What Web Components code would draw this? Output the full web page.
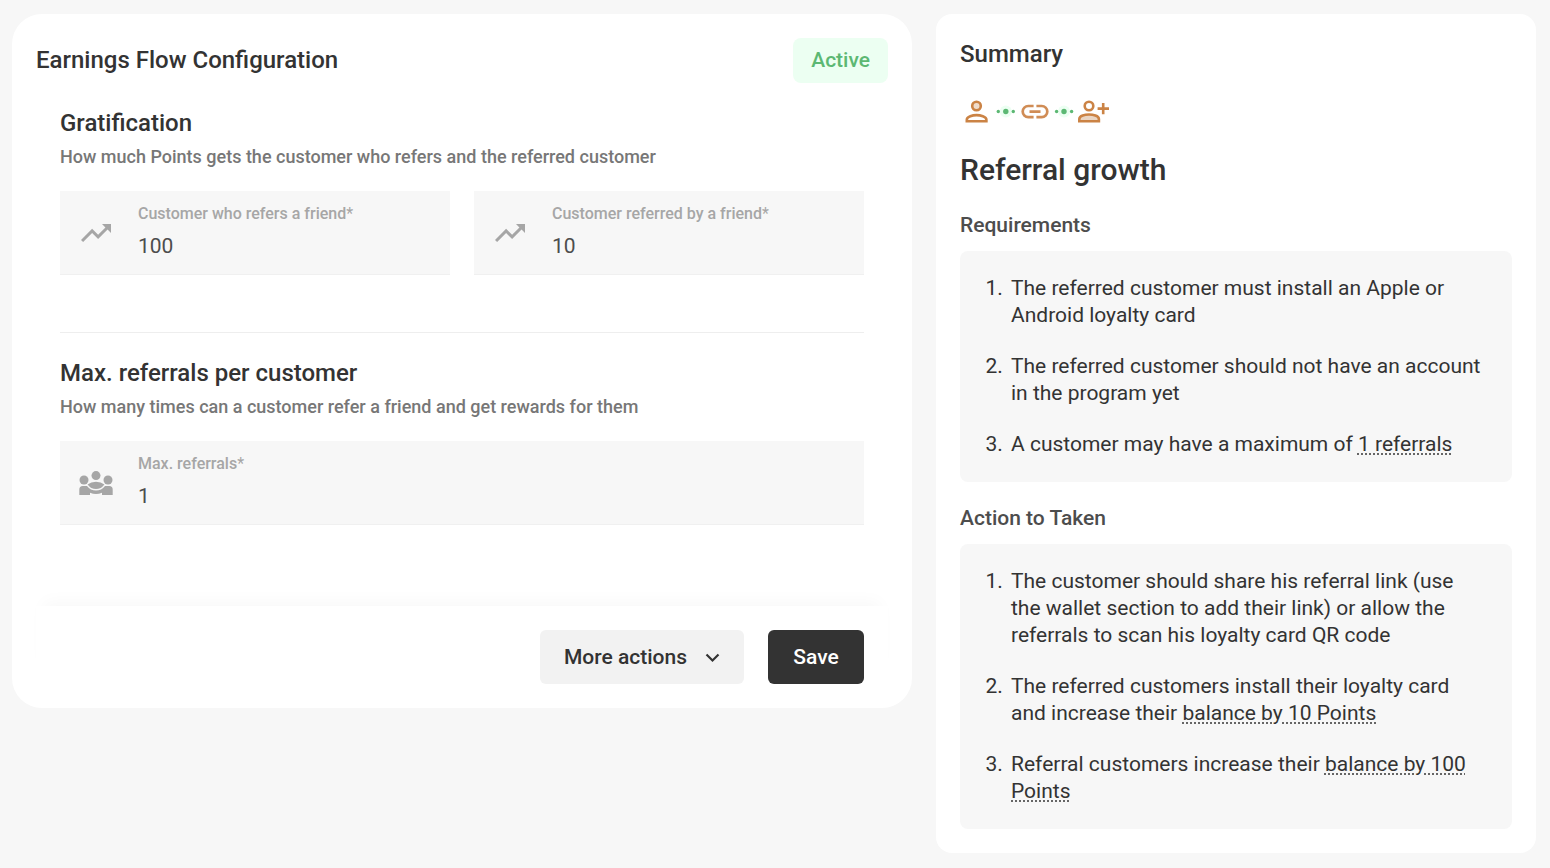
<!DOCTYPE html>
<html lang="en">
<head>
  <meta charset="UTF-8">
  <meta name="viewport" content="width=device-width, initial-scale=1.0">
  <title>Earnings Flow Configuration</title>
  <style>
    body {
      margin: 0;
      background: #f7f7f7;
      color: #333;
      font-family: Roboto, sans-serif;
      font-size: 21px;
    }
  </style>
</head>
<body>
  <referral-page></referral-page>

  <script>
    // Small helper: every component renders its markup once into an open shadow root
    class BaseElement extends HTMLElement {
      constructor() {
        super();
        this.attachShadow({ mode: 'open' });
      }

      connectedCallback() {
        this.shadowRoot.innerHTML = this.render();
      }
    }

    const ICONS = {
      trending: `
        <svg viewBox="0 0 24 24" width="36" height="36" aria-hidden="true">
          <path fill="currentColor" d="M16 6l2.29 2.29-4.88 4.88-4-4L2 16.59 3.41 18l6-6 4 4 6.3-6.29L22 12V6z"/>
        </svg>`,
      people: `
        <svg viewBox="0 0 36 36" width="36" height="36" fill="currentColor" aria-hidden="true">
          <circle cx="6" cy="15" r="4.5"/>
          <circle cx="18" cy="10.6" r="4.5"/>
          <circle cx="30" cy="15" r="4.5"/>
          <path d="M9.6 19.4Q13 16.7 18 16.7T26.4 19.4Q23 24 18 24T9.6 19.4z"/>
          <path d="M1.3 30v-5.5Q1.3 21 4.8 21H9q3.5 4.6 9 4.6T27 21h4.2q3.5 0 3.5 3.5V30H24v-2.3q-3 1.2-6 1.2t-6-1.2V30z"/>
        </svg>`
    };

    class UiCard extends BaseElement {
      render() {
        return `
          <style>
            :host {
              display: block;
              padding: 24px;
              border-radius: var(--card-radius, 16px);
              background: #fff;
            }
          </style>
          <slot></slot>
        `;
      }
    }

    class StatusBadge extends BaseElement {
      render() {
        return `
          <style>
            :host {
              display: block;
              padding: 0 18px;
              border-radius: 8px;
              background: #ecfff2;
              color: #5cb873;
              font-weight: 500;
              line-height: 45px;
            }
          </style>
          <slot></slot>
        `;
      }
    }

    class FormSection extends BaseElement {
      render() {
        return `
          <style>
            :host {
              display: block;
              margin: 24px 24px 0;
              padding-bottom: 57px;
            }
            :host([divided]) {
              border-bottom: 1px solid #eee;
            }
            h2 {
              margin: 0;
              font-size: 24px;
              font-weight: 500;
              line-height: 32px;
            }
            p {
              margin: 4px 0 20px;
              color: #777;
              font-size: 18px;
              font-weight: 500;
              line-height: 28px;
            }
            .fields {
              display: flex;
              gap: 24px;
            }
          </style>
          <h2>${this.getAttribute('heading')}</h2>
          <p>${this.getAttribute('description')}</p>
          <div class="fields"><slot></slot></div>
        `;
      }
    }

    class IconField extends BaseElement {
      render() {
        return `
          <style>
            :host {
              display: flex;
              flex: 1;
              align-items: center;
              gap: 24px;
              box-sizing: border-box;
              height: 84px;
              min-width: 0;
              padding: 0 18px;
              border-bottom: 1px solid #f0f0f0;
              background: #f7f7f7;
              color: #a6a6a6;
            }
            svg {
              display: block;
              flex: none;
            }
            .control {
              display: flex;
              flex: 1;
              flex-direction: column;
              gap: 4px;
              min-width: 0;
              padding-bottom: 2px;
            }
            label {
              font-size: 16px;
              font-weight: 500;
              line-height: 24px;
            }
            label span {
              font-weight: 400;
            }
            input {
              width: 100%;
              height: 32px;
              margin: 0;
              padding: 0;
              border: 0;
              outline: 0;
              background: none;
              color: #4d4d4d;
              font: inherit;
            }
          </style>
          ${ICONS[this.getAttribute('icon')]}
          <div class="control">
            <label for="value">${this.getAttribute('label')}<span>*</span></label>
            <input id="value" type="text" inputmode="numeric" required value="${this.getAttribute('value')}">
          </div>
        `;
      }
    }

    class FormActions extends BaseElement {
      render() {
        return `
          <style>
            :host {
              display: flex;
              justify-content: flex-end;
              gap: 24px;
              padding: 24px 24px 0;
              background: #fff;
              box-shadow: 0 -12px 16px -8px rgba(0, 0, 0, 0.03);
            }
            button {
              display: flex;
              align-items: center;
              justify-content: center;
              gap: 13px;
              height: 54px;
              min-width: 96px;
              border: 0;
              border-radius: 6px;
              font: inherit;
              font-weight: 500;
              cursor: pointer;
            }
            .more {
              padding: 0 20px 0 24px;
              background: #f2f2f2;
              color: #333;
            }
            .save {
              padding: 0 24px;
              background: #333;
              color: #fff;
            }
          </style>
          <button type="button" class="more">
            More actions
            <svg viewBox="0 0 24 24" width="24" height="24" aria-hidden="true">
              <path d="M6.5 9.5l6 6 6-6" fill="none" stroke="currentColor" stroke-width="2.2"/>
            </svg>
          </button>
          <button type="submit" class="save">Save</button>
        `;
      }
    }

    class EarningsForm extends BaseElement {
      render() {
        return `
          <style>
            :host {
              display: block;
            }
            ui-card {
              --card-radius: 30px;
            }
            header {
              display: flex;
              align-items: flex-start;
              justify-content: space-between;
            }
            h1 {
              margin: 0;
              font-size: 24px;
              font-weight: 500;
              line-height: 44px;
            }
            form-actions {
              margin-top: 24px;
            }
          </style>
          <ui-card>
            <header>
              <h1>Earnings Flow Configuration</h1>
              <status-badge>Active</status-badge>
            </header>
            <form-section divided heading="Gratification"
              description="How much Points gets the customer who refers and the referred customer">
              <icon-field icon="trending" label="Customer who refers a friend" value="100"></icon-field>
              <icon-field icon="trending" label="Customer referred by a friend" value="10"></icon-field>
            </form-section>
            <form-section heading="Max. referrals per customer"
              description="How many times can a customer refer a friend and get rewards for them">
              <icon-field icon="people" label="Max. referrals" value="1"></icon-field>
            </form-section>
            <form-actions></form-actions>
          </ui-card>
        `;
      }
    }

    // Person - link - new person, joined by green dots
    class ReferralFlow extends BaseElement {
      render() {
        return `
          <style>
            :host {
              display: block;
            }
            svg {
              display: block;
            }
          </style>
          <svg viewBox="0 0 152 36" width="152" height="36" aria-hidden="true">
            <g fill="none" stroke="#cb8345" stroke-width="2.6">
              <circle cx="16.5" cy="12" r="4.3" fill="#efdccb"/>
              <path d="M6.8 27.3v-1.5c0-3.3 6-4.7 9.7-4.7s9.9 1.4 9.9 4.7v1.5z"/>
              <circle cx="129" cy="12" r="4.3"/>
              <path d="M119.3 27.3v-2.4c0-3.3 5.8-4.4 9.7-4.4s9.9 1.1 9.9 4.4v2.4z" fill="#ead5c3"/>
              <path d="M143.2 9v11.2M137.6 14.6h11.4"/>
            </g>
            <g fill="none" stroke="#d08c55" stroke-width="2.7">
              <path d="M73.6 12h-5.3a5.6 5.6 0 0 0 0 11.2h5.3M76.4 12h5.3a5.6 5.6 0 0 1 0 11.2h-5.3M69.5 17.6h11"/>
            </g>
            <g fill="#ecfff2">
              <circle cx="45.8" cy="17.5" r="6"/>
              <circle cx="104" cy="17.5" r="6"/>
            </g>
            <g fill="#5cb873">
              <circle cx="38.3" cy="17.5" r="1.7"/>
              <circle cx="45.8" cy="17.5" r="2.7"/>
              <circle cx="53.3" cy="17.5" r="1.7"/>
              <circle cx="96.6" cy="17.5" r="1.7"/>
              <circle cx="104" cy="17.5" r="2.7"/>
              <circle cx="111.6" cy="17.5" r="1.7"/>
            </g>
          </svg>
        `;
      }
    }

    class StepList extends BaseElement {
      render() {
        return `
          <style>
            :host {
              display: block;
            }
            h3 {
              margin: 0 0 12px;
              color: #4d4d4d;
              font-size: 21px;
              font-weight: 500;
              line-height: 28px;
            }
            .box {
              padding: 24px 24px 24px 48px;
              border-radius: 8px;
              background: #f7f7f7;
            }
            ol {
              display: flex;
              flex-direction: column;
              gap: 24px;
              margin: 0;
              padding: 0;
              line-height: 27px;
            }
            ::slotted(li) {
              padding-left: 3px;
            }
          </style>
          <h3>${this.getAttribute('heading')}</h3>
          <div class="box"><ol><slot></slot></ol></div>
        `;
      }
    }

    class ReferralSummary extends BaseElement {
      render() {
        return `
          <style>
            :host {
              display: block;
            }
            h2 {
              margin: 0 0 24px;
              font-size: 24px;
              font-weight: 500;
              line-height: 32px;
            }
            .title {
              margin: 20px 0 21px;
              font-size: 30px;
              font-weight: 500;
              line-height: 40px;
            }
            step-list + step-list {
              margin-top: 22px;
            }
            li span {
              text-decoration: underline dotted #666 2px;
              text-underline-offset: 2px;
            }
          </style>
          <ui-card>
            <h2>Summary</h2>
            <referral-flow></referral-flow>
            <p class="title">Referral growth</p>
            <step-list heading="Requirements">
              <li>The referred customer must install an Apple or Android loyalty card</li>
              <li>The referred customer should not have an account in the program yet</li>
              <li>A customer may have a maximum of <span>1 referrals</span></li>
            </step-list>
            <step-list heading="Action to Taken">
              <li>The customer should share his referral link (use the wallet section to add their link) or allow the referrals to scan his loyalty card QR code</li>
              <li>The referred customers install their loyalty card and increase their <span>balance by 10 Points</span></li>
              <li>Referral customers increase their <span>balance by 100 Points</span></li>
            </step-list>
          </ui-card>
        `;
      }
    }

    class ReferralPage extends BaseElement {
      render() {
        return `
          <style>
            :host {
              display: grid;
              grid-template-columns: 3fr 2fr;
              align-items: start;
              gap: 24px;
              padding: 14px 14px 14px 12px;
            }
          </style>
          <earnings-form></earnings-form>
          <referral-summary></referral-summary>
        `;
      }
    }

    customElements.define('ui-card', UiCard);
    customElements.define('status-badge', StatusBadge);
    customElements.define('form-section', FormSection);
    customElements.define('icon-field', IconField);
    customElements.define('form-actions', FormActions);
    customElements.define('earnings-form', EarningsForm);
    customElements.define('referral-flow', ReferralFlow);
    customElements.define('step-list', StepList);
    customElements.define('referral-summary', ReferralSummary);
    customElements.define('referral-page', ReferralPage);
  </script>
</body>
</html>
